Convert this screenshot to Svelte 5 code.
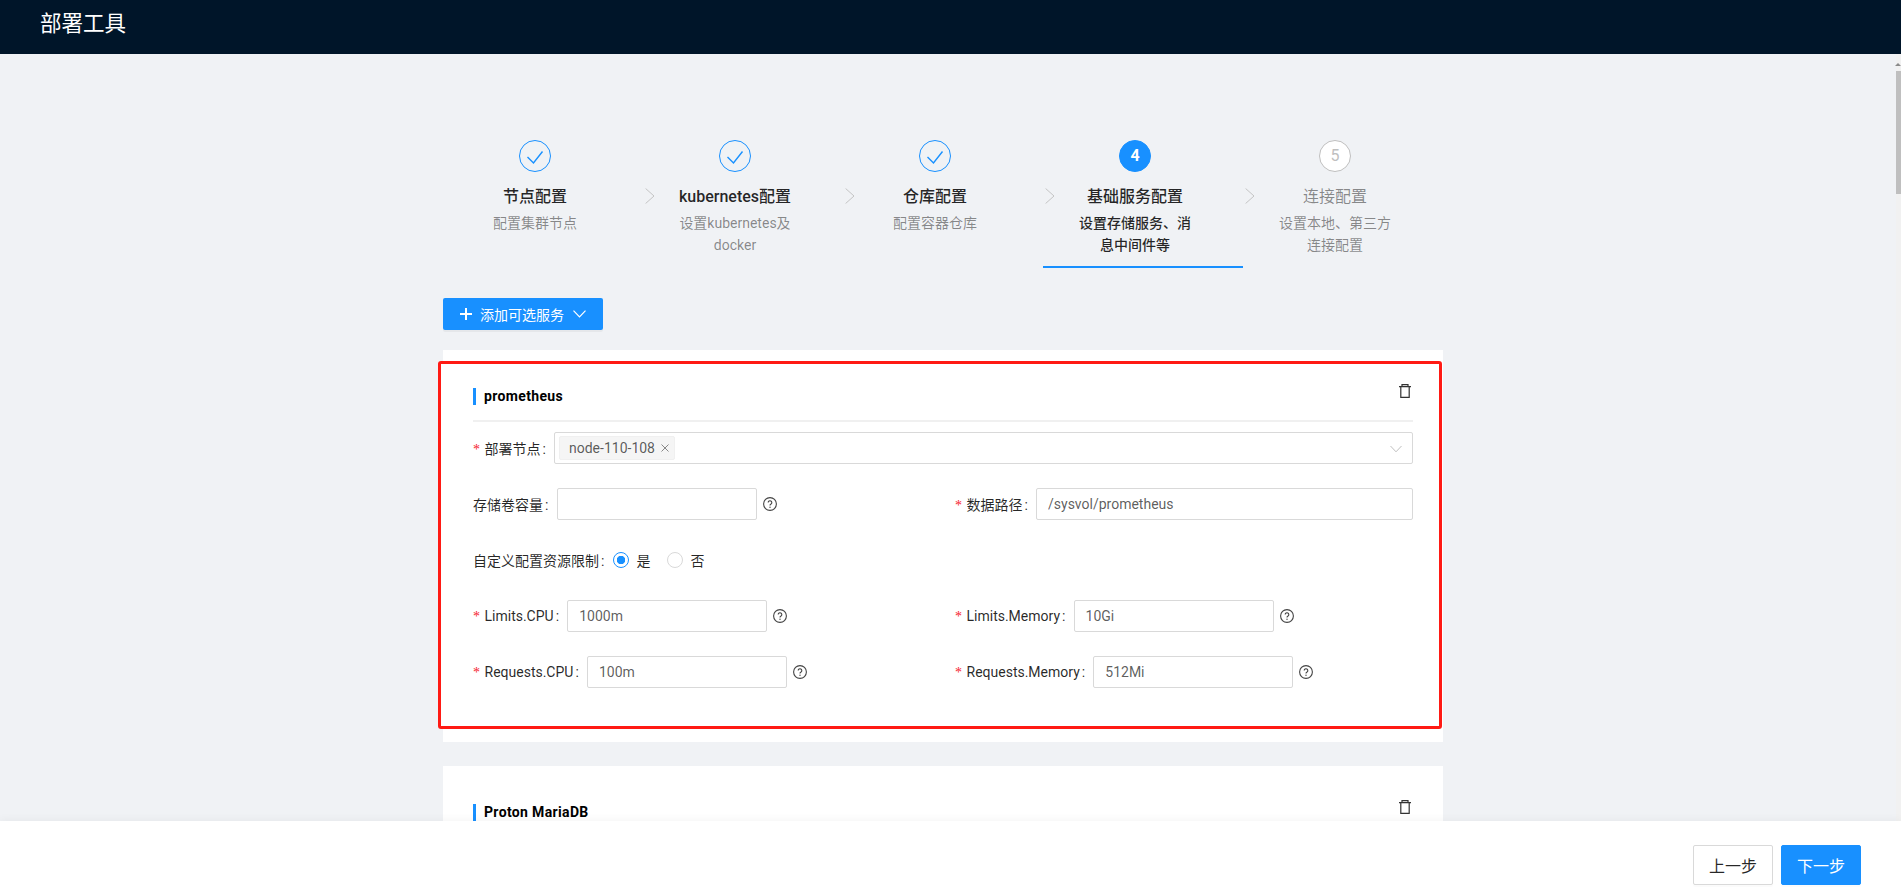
<script>
  const steps = [
    { title: '节点配置', sub: '配置集群节点', state: 'done' },
    { title: 'kubernetes配置', sub: '设置kubernetes及docker', state: 'done' },
    { title: '仓库配置', sub: '配置容器仓库', state: 'done' },
    { title: '基础服务配置', sub: '设置存储服务、消息中间件等', state: 'active', n: 4 },
    { title: '连接配置', sub: '设置本地、第三方连接配置', state: 'todo', n: 5 }
  ];
</script>

{#snippet trash()}
  <svg class="trash" width="14" height="14" viewBox="0 0 14 14" fill="none" stroke="#333" stroke-width="1.2">
    <path d="M1 2.600h12M4 2.600V.7h6v1.900M2.800 2.600v10.700h8.400V2.600" />
  </svg>
{/snippet}

{#snippet help()}
  <svg class="help" width="14" height="14" viewBox="0 0 14 14" fill="none" stroke="#444" stroke-width="1.1">
    <circle cx="7" cy="7" r="6.400" />
    <path d="M5.200 5.500a1.800 1.800 0 1 1 2.800 1.500c-.7.4-1 .7-1 1.400" stroke-width="1.100" />
    <circle cx="7" cy="10.200" r=".7" fill="#444" stroke="none" />
  </svg>
{/snippet}

{#snippet label(text, req)}
  <span class="label">{#if req}<i class="star">*</i>{/if}{text}<span class="colon">:</span></span>
{/snippet}

<div class="page">
  <header class="top"><span class="brand">部署工具</span></header>

  <main class="main">
    <div class="wrap">
      <ol class="steps">
        {#each steps as s, i}
          <li class="step {s.state}">
            {#if i > 0}
              <svg class="arrow" width="10" height="16" viewBox="0 0 10 16" fill="none" stroke="#c4c4c4" stroke-width="1"><path d="M.6.5 9 8 .6 15.500" /></svg>
            {/if}
            <span class="dot">
              {#if s.state === 'done'}
                <svg width="30" height="30" viewBox="0 0 30 30" fill="none" stroke="#1890ff" stroke-width="1.400"><path d="M7.500 16l6 6L22.500 10.500" /></svg>
              {:else}
                {s.n}
              {/if}
            </span>
            <div class="title">{s.title}</div>
            <div class="sub">{s.sub}</div>
          </li>
        {/each}
      </ol>

      <button class="add">
        <svg width="12" height="12" viewBox="0 0 12 12" stroke="#fff" stroke-width="2"><path d="M6 0v12M0 6h12" /></svg>
        <span>添加可选服务</span>
        <svg width="13" height="8" viewBox="0 0 13 8" fill="none" stroke="#fff" stroke-width="1.200"><path d="M.5.7 6.500 7 12.500.7" /></svg>
      </button>

      <section class="card">
        <div class="mark">
          <div class="head">
            <h3>prometheus</h3>
            {@render trash()}
          </div>

          <div class="row">
            {@render label('部署节点', true)}
            <div class="select">
              <span class="tag">node-110-108
                <svg width="8" height="8" viewBox="0 0 8 8" stroke="#888" stroke-width="1"><path d="M.5.5l7 7M7.500.5l-7 7" /></svg>
              </span>
              <svg class="caret" width="12" height="8" viewBox="0 0 12 8" fill="none" stroke="#bfbfbf" stroke-width="1"><path d="M.5 1 6 6.800 11.500 1" /></svg>
            </div>
          </div>

          <div class="cols">
            <div class="row">
              {@render label('存储卷容量', false)}
              <input class="input" value="" />
              {@render help()}
            </div>
            <div class="row">
              {@render label('数据路径', true)}
              <input class="input grow" value="/sysvol/prometheus" />
            </div>
          </div>

          <div class="row radios">
            {@render label('自定义配置资源限制', false)}
            <span class="radio on"></span><span class="opt">是</span>
            <span class="radio"></span><span class="opt">否</span>
          </div>

          <div class="cols">
            <div class="row">
              {@render label('Limits.CPU', true)}
              <input class="input" value="1000m" />
              {@render help()}
            </div>
            <div class="row">
              {@render label('Limits.Memory', true)}
              <input class="input" value="10Gi" />
              {@render help()}
            </div>
          </div>

          <div class="cols">
            <div class="row">
              {@render label('Requests.CPU', true)}
              <input class="input" value="100m" />
              {@render help()}
            </div>
            <div class="row">
              {@render label('Requests.Memory', true)}
              <input class="input" value="512Mi" />
              {@render help()}
            </div>
          </div>
        </div>
      </section>

      <section class="card plain">
        <div class="head">
          <h3>Proton MariaDB</h3>
          {@render trash()}
        </div>
      </section>
    </div>

    <div class="scrollbar" aria-hidden="true"><span class="up"></span><span class="thumb"></span></div>
  </main>

  <footer class="foot">
    <button class="btn">上一步</button>
    <button class="btn primary">下一步</button>
  </footer>
</div>

<style>
  :global(body) {
    margin: 0;
    overflow: hidden;
  }
  .page {
    position: relative;
    height: 894px;
    overflow: hidden;
    background: #f0f2f5;
    font-family: Roboto, "Noto Sans CJK SC", sans-serif;
    font-size: 14px;
    color: rgba(0, 0, 0, 0.85);
  }
  .top {
    height: 54px;
    background: #001529;
    padding-left: 40px;
  }
  .brand {
    font-size: 21.500px;
    line-height: 48px;
    color: #fff;
  }
  .main {
    position: relative;
    height: 840px;
    overflow: hidden;
    padding-right: 15px;
  }
  .wrap {
    width: 1000px;
    margin: 0 auto;
    padding-top: 86px;
  }
  .steps {
    display: flex;
    list-style: none;
    margin: 0;
    padding: 0;
  }
  .step {
    position: relative;
    width: 120px;
    height: 126px;
    padding: 0 48px 0 32px;
    box-sizing: content-box;
    text-align: center;
    border-bottom: 2px solid transparent;
  }
  .step.active {
    border-bottom-color: #1890ff;
  }
  .arrow {
    position: absolute;
    left: 2px;
    top: 48px;
  }
  .dot {
    display: flex;
    align-items: center;
    justify-content: center;
    width: 30px;
    height: 30px;
    margin: 0 auto 13px;
    border: 1px solid #1890ff;
    border-radius: 50%;
    font-size: 16px;
    line-height: 1;
  }
  .active .dot {
    background: #1890ff;
    color: #fff;
    font-weight: 700;
  }
  .todo .dot {
    background: #fff;
    border-color: #bfbfbf;
    color: #bfbfbf;
  }
  .title {
    font-size: 16px;
    line-height: 24px;
    margin-bottom: 3px;
  }
  .sub {
    line-height: 22px;
    color: rgba(0, 0, 0, 0.45);
  }
  .done .title,
  .active .title {
    font-weight: 500;
  }
  .active .sub {
    color: rgba(0, 0, 0, 0.85);
    font-weight: 500;
  }
  .todo .title {
    color: rgba(0, 0, 0, 0.45);
  }
  .add {
    display: flex;
    align-items: center;
    width: 160px;
    height: 32px;
    margin: 30px 0 20px;
    padding: 0 0 0 17px;
    border: 0;
    border-radius: 2px;
    background: #1890ff;
    color: #fff;
    font: inherit;
    box-shadow: 0 2px 0 rgba(0, 0, 0, 0.045);
  }
  .add span {
    margin: 0 9px 0 8px;
  }
  .card {
    background: #fff;
    padding: 11px 1px 13px 0;
    margin-bottom: 24px;
  }
  .mark {
    margin-left: -5px;
    padding: 0 26px 0 32px;
    height: 362px;
    border: 3px solid #ff1a14;
    border-radius: 3px;
    background: #fff;
  }
  .card.plain {
    padding: 34px 30px 60px;
  }
  .head {
    display: flex;
    justify-content: space-between;
    align-items: flex-start;
    height: 36px;
    padding-top: 20px;
    margin-bottom: 10px;
    border-bottom: 2px solid #f0f0f0;
  }
  .plain .head {
    padding-top: 0;
  }
  h3 {
    margin: 4px 0 0;
    padding-left: 8px;
    border-left: 3px solid #1890ff;
    font-size: 14px;
    line-height: 17px;
    font-weight: 700;
    letter-spacing: 0.35px;
    color: #000;
  }
  .trash {
    margin-right: 1px;
  }
  .row {
    display: flex;
    align-items: center;
    height: 32px;
    margin-bottom: 24px;
    min-width: 0;
  }
  .cols {
    display: grid;
    grid-template-columns: 1fr 1fr;
    column-gap: 24px;
  }
  .label {
    flex: none;
    white-space: nowrap;
    color: rgba(0, 0, 0, 0.85);
  }
  .star {
    display: inline-block;
    width: 11.500px;
    color: #f5222d;
    font-style: normal;
    font-family: "Liberation Serif", serif;
  }
  .colon {
    display: inline-block;
    width: 11.500px;
    margin-left: 2px;
  }
  .select {
    position: relative;
    flex: 1;
    display: flex;
    align-items: center;
    box-sizing: border-box;
    height: 32px;
    padding-left: 4px;
    border: 1px solid #d9d9d9;
    border-radius: 2px;
    background: #fff;
  }
  .tag {
    display: flex;
    align-items: center;
    gap: 6px;
    box-sizing: border-box;
    height: 24px;
    padding: 0 5px 0 9px;
    background: #f5f5f5;
    border: 1px solid #f0f0f0;
    border-radius: 2px;
    color: rgba(0, 0, 0, 0.65);
  }
  .caret {
    position: absolute;
    right: 10px;
    top: 12px;
  }
  .input {
    flex: none;
    box-sizing: border-box;
    width: 200px;
    height: 32px;
    padding: 0 11px;
    border: 1px solid #d9d9d9;
    border-radius: 2px;
    background: #fff;
    font: inherit;
    color: rgba(0, 0, 0, 0.65);
    outline: none;
  }
  .input.grow {
    flex: 1;
    width: auto;
    min-width: 0;
  }
  .help {
    flex: none;
    margin-left: 6px;
  }
  .radio {
    flex: none;
    box-sizing: border-box;
    width: 16px;
    height: 16px;
    margin-right: 8px;
    border: 1px solid #d9d9d9;
    border-radius: 50%;
    background: #fff;
  }
  .radio.on {
    border-color: #1890ff;
    background: radial-gradient(circle, #1890ff 0 4px, #fff 4.500px);
  }
  .opt {
    margin-right: 16px;
  }
  .foot {
    position: absolute;
    left: 0;
    right: 0;
    bottom: 0;
    display: flex;
    justify-content: flex-end;
    gap: 8px;
    height: 73px;
    box-sizing: border-box;
    padding: 24px 40px 0 0;
    background: #fff;
    box-shadow: 0 -2px 8px rgba(0, 0, 0, 0.04);
  }
  .btn {
    width: 80px;
    height: 40px;
    border: 1px solid #d9d9d9;
    border-radius: 2px;
    background: #fff;
    font: inherit;
    font-size: 16px;
    color: rgba(0, 0, 0, 0.85);
    box-shadow: 0 2px 0 rgba(0, 0, 0, 0.015);
  }
  .btn.primary {
    border-color: #1890ff;
    background: #1890ff;
    color: #fff;
  }
  .scrollbar {
    position: absolute;
    top: 0;
    right: 0;
    bottom: 0;
    width: 5px;
    background: #f1f1f1;
  }
  .up {
    position: absolute;
    top: 9px;
    right: 0;
    border: 3px solid transparent;
    border-top: 0;
    border-bottom-color: #8a8a8a;
  }
  .thumb {
    position: absolute;
    top: 17px;
    left: 0;
    width: 5px;
    height: 123px;
    background: #bfbfbf;
  }
</style>
